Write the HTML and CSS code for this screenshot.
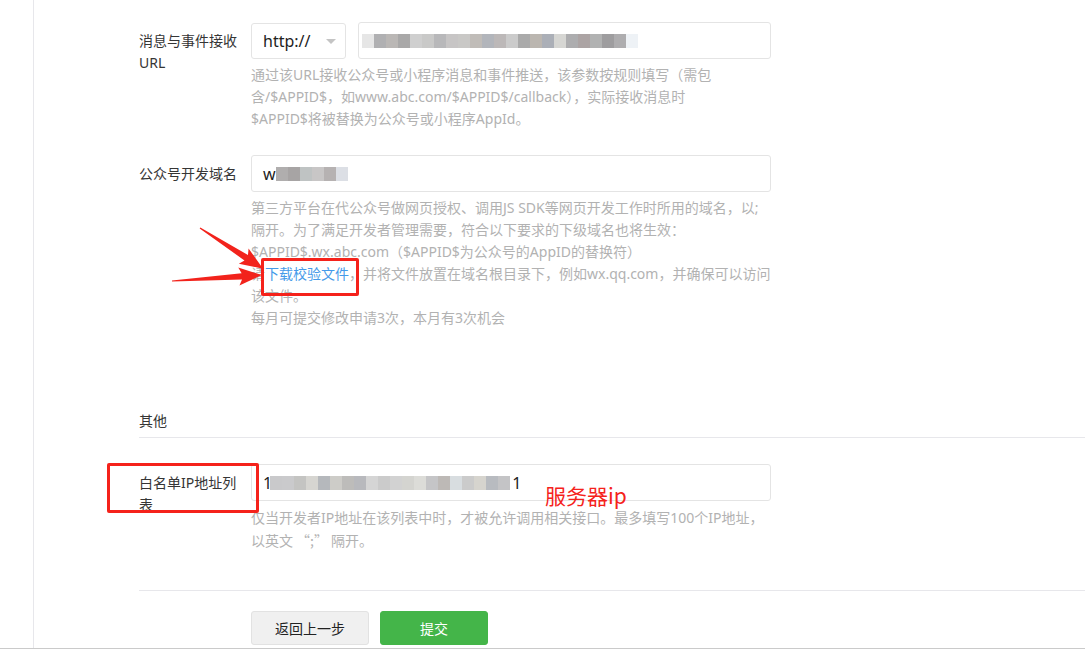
FILE: index.html
```html
<!DOCTYPE html>
<html lang="zh-CN">
<head>
<meta charset="utf-8">
<title>开发配置</title>
<link rel="stylesheet" href="styles.css">
</head>
<body>
<div class="page">
  <div class="panel">
    <div class="content">
      <div class="row row-first">
        <div class="label">消息与事件接收<br>URL</div>
        <div class="field">
          <div class="inputs">
            <div class="select"><span class="select-text">http://</span><span class="caret"></span></div>
            <div class="input input-url">
              <span class="mosaic">
                <i class="b" style="background:#e6e6e6"></i><i class="b" style="background:#b0b0b2"></i><i class="b" style="background:#bab7b5"></i><i class="b" style="background:#a9a8a8"></i><i class="b" style="background:#cfcfcf"></i><i class="b" style="background:#c9c9c8"></i><i class="b" style="background:#b8b8ba"></i><i class="b" style="background:#c7c5c5"></i><i class="b" style="background:#c9c8c6"></i><i class="b" style="background:#c0bcb8"></i><i class="b" style="background:#b2b5bb"></i><i class="b" style="background:#bcb8b8"></i><i class="b" style="background:#cbcbcb"></i><i class="b" style="background:#aaaaaa"></i><i class="b" style="background:#bbb6b0"></i><i class="b" style="background:#abafb7"></i><i class="b" style="background:#d6d6d3"></i><i class="b" style="background:#adadaf"></i><i class="b" style="background:#aca4a4"></i><i class="b" style="background:#b1b2b2"></i><i class="b" style="background:#9e9d9f"></i><i class="b" style="background:#aeadaf"></i><i class="b" style="background:#eef2f6"></i>
              </span>
            </div>
          </div>
          <p class="tips">通过该URL接收公众号或小程序消息和事件推送，该参数按规则填写（需包<br>含/$APPID$，如www.abc.com/$APPID$/callback），实际接收消息时<br>$APPID$将被替换为公众号或小程序AppId。</p>
        </div>
      </div>

      <div class="row row-second">
        <div class="label">公众号开发域名</div>
        <div class="field">
          <div class="input input-full">
            <span class="val">w</span>
            <span class="mosaic">
              <i class="b" style="background:#b0aeae"></i><i class="b" style="background:#a7a4a4"></i><i class="b" style="background:#bfc3c3"></i><i class="b" style="background:#c8c6c6"></i><i class="b" style="background:#b6b2b2"></i><i class="b" style="background:#dcdfe5"></i>
            </span>
          </div>
          <p class="tips">第三方平台在代公众号做网页授权、调用JS SDK等网页开发工作时所用的域名，以;<br>隔开。为了满足开发者管理需要，符合以下要求的下级域名也将生效：<br>$APPID$.wx.abc.com（$APPID$为公众号的AppID的替换符）<br>请<a class="link" href="#">下载校验文件</a>，并将文件放置在域名根目录下，例如wx.qq.com，并确保可以访问<br>该文件。<br>每月可提交修改申请3次，本月有3次机会</p>
        </div>
      </div>

      <h3 class="section-title">其他</h3>

      <div class="row row-third">
        <div class="label">白名单IP地址列<br>表</div>
        <div class="field">
          <div class="input input-full">
            <span class="val">1</span>
            <span class="mosaic mosaic-ip">
              <i class="b" style="background:#c9c9cb"></i><i class="b" style="background:#cacacc"></i><i class="b" style="background:#c4c4c2"></i><i class="b" style="background:#d6d5d1"></i><i class="b" style="background:#b5b8bc"></i><i class="b" style="background:#cdccc8"></i><i class="b" style="background:#bdbcba"></i><i class="b" style="background:#b8b9bd"></i><i class="b" style="background:#d5d5d5"></i><i class="b" style="background:#cbcbcb"></i><i class="b" style="background:#d2d2d2"></i><i class="b" style="background:#d4d4d0"></i><i class="b" style="background:#dcdcd8"></i><i class="b" style="background:#c5c5c7"></i><i class="b" style="background:#bdb9b6"></i><i class="b" style="background:#d8dde0"></i><i class="b" style="background:#cbcbcb"></i><i class="b" style="background:#d6d4ce"></i><i class="b" style="background:#b8bbc0"></i><i class="b" style="background:#c4c4c6"></i>
            </span>
            <span class="val val-end">1</span>
          </div>
          <p class="tips tips-third">仅当开发者IP地址在该列表中时，才被允许调用相关接口。最多填写100个IP地址，<br>以英文<span class="cjk">“;”</span>隔开。</p>
        </div>
      </div>

      <div class="actions">
        <button class="btn btn-default" type="button">返回上一步</button>
        <button class="btn btn-primary" type="button">提交</button>
      </div>
    </div>
  </div>

  <div class="mark mark-link"></div>
  <div class="mark mark-label"></div>
  <span class="note">服务器ip</span>
  <svg class="arrows" width="120" height="80" viewBox="0 0 120 80">
    <g transform="translate(38,13) rotate(32.8)">
      <polygon points="0,-0.6 55,-3.2 52,-9 75,0 52,9 55,3.2 0,0.6" fill="#f2231c"/>
    </g>
    <g transform="translate(10,66) rotate(-3.8)">
      <polygon points="0,-0.6 70,-3.2 67,-9 90,0 67,9 70,3.2 0,0.6" fill="#f2231c"/>
    </g>
  </svg>
  <div class="green-bit"></div>
</div>
</body>
</html>
```

FILE: styles.css
```css
html, body {
  margin: 0;
  padding: 0;
  background: #fff;
}

body {
  font-family: "Noto Sans", "Noto Sans CJK SC", sans-serif;
  font-size: 14px;
  color: #353535;
  overflow: hidden;
}

.page {
  position: relative;
  height: 648px;
  border-bottom: 1px solid #cacaca;
}

.panel {
  margin-left: 33px;
  height: 100%;
  border-left: 1px solid #e7e7eb;
}

.content {
  padding-left: 105px;
  padding-top: 22px;
}

.row {
  display: grid;
  grid-template-columns: 112px 520px;
}

.row-second {
  margin-top: 25px;
}

.row-third {
  margin-top: 26px;
}

.label {
  padding-top: 8px;
  line-height: 22px;
  color: #353535;
}

.inputs {
  display: flex;
  align-items: flex-start;
  gap: 12px;
}

.select {
  box-sizing: border-box;
  width: 95px;
  height: 36px;
  border: 1px solid #e4e4e4;
  border-radius: 3px;
  display: flex;
  align-items: center;
  justify-content: space-between;
  padding: 0 9px 0 11px;
  margin-top: 1px;
}

.select-text {
  font-size: 16px;
  color: #222;
}

.caret {
  width: 0;
  height: 0;
  border-left: 5px solid transparent;
  border-right: 5px solid transparent;
  border-top: 5px solid #c4c4c4;
}

.input {
  box-sizing: border-box;
  height: 37px;
  border: 1px solid #e4e4e4;
  border-radius: 3px;
  display: flex;
  align-items: center;
  padding: 0 11px;
  font-size: 16px;
  color: #222;
}

.input-url {
  width: 415px;
  padding-left: 3px;
}

.input-full {
  width: 520px;
}

.mosaic {
  display: flex;
  height: 14px;
  margin-top: 1px;
}

.mosaic .b {
  display: block;
  width: 12px;
  height: 14px;
}

.mosaic-ip {
  margin-left: -2px;
}

.val {
  line-height: 20px;
}

.val-end {
  margin-left: 2px;
}

.tips {
  margin: 5px 0 0;
  line-height: 22px;
  color: #b2b2b2;
  white-space: nowrap;
}

.tips-third {
  margin-top: 6px;
}

.cjk {
  font-family: "Noto Sans CJK SC", sans-serif;
  margin: 0 3px;
}

.link {
  color: #459ae9;
  text-decoration: none;
}

.section-title {
  margin: 81px 0 0;
  font-size: 14px;
  font-weight: normal;
  line-height: 22px;
  padding-bottom: 5px;
  border-bottom: 1px solid #e7e7eb;
  color: #353535;
}

.actions {
  margin-top: 38px;
  border-top: 1px solid #e7e7eb;
  padding: 20px 0 0 112px;
  display: flex;
  gap: 11px;
}

.btn {
  box-sizing: border-box;
  height: 34px;
  border-radius: 3px;
  font-family: "Noto Sans", "Noto Sans CJK SC", sans-serif;
  font-size: 14px;
  cursor: pointer;
  padding: 0;
}

.btn-default {
  width: 118px;
  background: #f0f0f0;
  border: 1px solid #e2e2e2;
  color: #222;
}

.btn-primary {
  width: 108px;
  background: #44b549;
  border: 1px solid #44b549;
  color: #fff;
}

.mark {
  position: absolute;
  box-sizing: border-box;
  border: 3px solid #f5221b;
  border-radius: 2px;
}

.mark-link {
  left: 261px;
  top: 258px;
  width: 98px;
  height: 38px;
}

.mark-label {
  left: 107px;
  top: 463px;
  width: 152px;
  height: 50px;
}

.note {
  position: absolute;
  left: 545px;
  top: 484px;
  font-size: 21px;
  line-height: 23px;
  color: #f5221b;
  font-family: "Noto Sans CJK SC", sans-serif;
}

.arrows {
  position: absolute;
  left: 162px;
  top: 215px;
}

.green-bit {
  position: absolute;
  left: 1025px;
  top: 651px;
  width: 7px;
  height: 2px;
  background: #3ed63e;
}
```
